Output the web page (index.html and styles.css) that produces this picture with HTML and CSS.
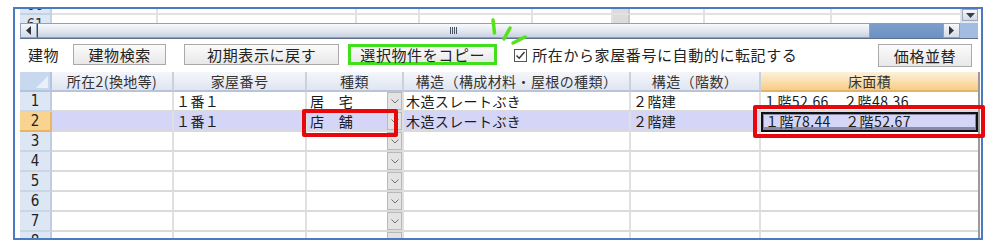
FILE: index.html
```html
<!DOCTYPE html>
<html lang="ja">
<head>
    <meta charset="UTF-8">
    <title>建物</title>
    <link rel="stylesheet" href="styles.css">
</head>
<body>
<div class="page">
    <div class="frame">
        <div class="upper">
            <div class="upper-grid">
                <div class="upper-rows">
                    <div class="uc rh num">60</div><div class="uc"></div><div class="uc"></div><div class="uc"></div><div class="uc"></div><div class="uc"></div><div class="uc dd-cell"></div><div class="uc"></div><div class="uc"></div><div class="uc"></div>
                    <div class="uc rh num">61</div><div class="uc"></div><div class="uc"></div><div class="uc"></div><div class="uc"></div><div class="uc"></div><div class="uc dd-cell"></div><div class="uc"></div><div class="uc"></div><div class="uc"></div>
                </div>
            </div>
            <div class="vscroll">
                <div class="vs-btn"><svg width="9" height="5" viewBox="0 0 9 5"><polygon points="0,0 9,0 4.5,5" fill="#3a3f4a"/></svg></div>
            </div>
        </div>

        <div class="hscroll">
            <div class="sb-btn"><svg width="5" height="9" viewBox="0 0 5 9"><polygon points="5,0 5,9 0,4.5" fill="#2f3440"/></svg></div>
            <div class="sb-thumb"><span class="grip"></span></div>
            <div class="sb-track"></div>
            <div class="sb-btn"><svg width="5" height="9" viewBox="0 0 5 9"><polygon points="0,0 0,9 5,4.5" fill="#2f3440"/></svg></div>
            <div class="sb-corner"></div>
        </div>

        <div class="toolbar">
            <span class="tb-label">建物</span>
            <button class="tb-btn btn-search">建物検索</button>
            <button class="tb-btn btn-reset">初期表示に戻す</button>
            <button class="tb-btn btn-copy">選択物件をコピー</button>
            <label class="tb-check">
                <svg width="13" height="13" viewBox="0 0 13 13"><rect x="0.5" y="0.5" width="12" height="12" fill="#fff" stroke="#555"/><polyline points="2.5,6.5 5.2,9.3 10.5,3" fill="none" stroke="#333" stroke-width="1.4"/></svg>
                所在から家屋番号に自動的に転記する
            </label>
            <button class="tb-btn btn-price">価格並替</button>
        </div>

        <div class="grid">
            <div class="hc corner"><svg width="12" height="12" viewBox="0 0 12 12"><polygon points="12,0 12,12 0,12" fill="#eaf0f9"/></svg></div>
            <div class="hc">所在2(換地等)</div>
            <div class="hc">家屋番号</div>
            <div class="hc">種類</div>
            <div class="hc">構造（構成材料・屋根の種類）</div>
            <div class="hc">構造（階数）</div>
            <div class="hc hc-active">床面積</div>

            <div class="c rh num">1</div><div class="c"></div><div class="c">１番１</div><div class="c kind"><span>居　宅</span><i class="dd"></i></div><div class="c">木造スレートぶき</div><div class="c">２階建</div><div class="c">１階52.66　２階48.36</div>

            <div class="c rh num rh-sel">2</div><div class="c sel"></div><div class="c sel">１番１</div><div class="c sel kind"><span>店　舗</span><i class="dd"></i></div><div class="c sel">木造スレートぶき</div><div class="c sel">２階建</div><div class="c sel focus">１階78.44　２階52.67</div>

            <div class="c rh num">3</div><div class="c"></div><div class="c"></div><div class="c kind"><span></span><i class="dd"></i></div><div class="c"></div><div class="c"></div><div class="c"></div>
            <div class="c rh num">4</div><div class="c"></div><div class="c"></div><div class="c kind"><span></span><i class="dd"></i></div><div class="c"></div><div class="c"></div><div class="c"></div>
            <div class="c rh num">5</div><div class="c"></div><div class="c"></div><div class="c kind"><span></span><i class="dd"></i></div><div class="c"></div><div class="c"></div><div class="c"></div>
            <div class="c rh num">6</div><div class="c"></div><div class="c"></div><div class="c kind"><span></span><i class="dd"></i></div><div class="c"></div><div class="c"></div><div class="c"></div>
            <div class="c rh num">7</div><div class="c"></div><div class="c"></div><div class="c kind"><span></span><i class="dd"></i></div><div class="c"></div><div class="c"></div><div class="c"></div>
            <div class="c rh num">8</div><div class="c"></div><div class="c"></div><div class="c kind"><span></span><i class="dd"></i></div><div class="c"></div><div class="c"></div><div class="c"></div>
        </div>
    </div>

    <!-- 注記 -->
    <svg class="mark-green" width="40" height="32" viewBox="0 0 40 32">
        <line x1="5" y1="3" x2="6.5" y2="16" />
        <line x1="22" y1="11" x2="16" y2="22" />
        <line x1="37" y1="20" x2="25" y2="26" />
    </svg>
    <div class="mark-red mark-kind"></div>
    <div class="mark-red mark-area"></div>
</div>
</body>
</html>
```

FILE: styles.css
```css
body { margin: 0; background: #fff; font-family: "Noto Sans CJK JP", sans-serif; color: #222; }
.page { position: relative; width: 1000px; height: 250px; overflow: hidden; }

.frame { margin: 7px 0 0 13px; width: 970px; height: 233px; box-sizing: border-box; border: 2px solid #4a7bc2; padding-left: 5px; overflow: hidden; display: flex; flex-direction: column; background: #fff; }

/* 上段（スクロール済みの一覧） */
.upper { display: flex; height: 14px; flex: none; }
.upper-grid { width: 942px; height: 14px; overflow: hidden; }
.upper-rows { display: grid; grid-template-columns: 32px 106px 199px 63px 113px 80px 17px 75px 127px 130px; grid-auto-rows: 20px; margin-top: -14px; }
.uc { box-sizing: border-box; border-right: 2px solid #e2e2e2; border-bottom: 2px solid #e2e2e2; }
.uc.rh { background: #dde7f4; border-color: #c4d2e6; line-height: 20px; text-align: center; color: #333; }
.uc.dd-cell { background: #dcdcdc; border-right-color: #c8c8c8; }
.vscroll { width: 16px; background: #e4e9f0; }
.vs-btn { height: 12px; box-sizing: border-box; border: 1px solid #9aa8bd; background: linear-gradient(#f5f7fa, #d3dae5); display: flex; align-items: center; justify-content: center; }

.hscroll { display: flex; height: 15px; flex: none; width: 958px; border-bottom: 1px solid #5d6f8c; }
.sb-btn { width: 17px; box-sizing: border-box; border: 1px solid #8fa2bf; background: linear-gradient(#f6f8fb, #d4dce8); display: flex; align-items: center; justify-content: center; }
.sb-thumb { width: 833px; box-sizing: border-box; border: 1px solid #8ea1bf; border-left-color: #3b4658; background: linear-gradient(#f8fafc 0%, #e6ebf2 45%, #c7d2e1 100%); display: flex; align-items: center; justify-content: center; }
.grip { width: 7px; height: 7px; background: repeating-linear-gradient(90deg, #4a5366 0 1px, transparent 1px 2px); }
.sb-track { width: 73px; background: linear-gradient(#7e9fcb, #6b91c4); }
.sb-corner { width: 18px; background: #a3bde2; }

/* ツールバー */
.toolbar { display: flex; align-items: flex-start; height: 33px; flex: none; padding-top: 5px; box-sizing: border-box; font-size: 15px; letter-spacing: 0.6px; color: #222; }
.tb-label { margin: 1px 0 0 8px; line-height: 20px; }
.tb-btn { font: inherit; letter-spacing: inherit; color: #222; height: 21px; padding: 0; line-height: 19px; box-sizing: border-box; border: 1px solid #aaaaaa; background: linear-gradient(#fbfbfb, #e8e8e8); }
.btn-search { width: 93px; margin-left: 14px; }
.btn-reset { width: 155px; margin-left: 18px; }
.btn-copy { width: 149px; margin-left: 9px; border: 3px solid #41e01c; line-height: 15px; }
.tb-check { display: flex; align-items: center; gap: 5px; margin: 1px 0 0 17px; line-height: 20px; }
.btn-price { width: 94px; height: 23px; margin-left: auto; margin-right: 9px; line-height: 21px; }

/* 建物一覧 */
.grid { display: grid; grid-template-columns: 32px 122px 133px 97px 227px 130px 217px; grid-auto-rows: 20px; width: 958px; border-right: 2px solid #9a9a9a; font-size: 14px; letter-spacing: 0.4px; color: #1a1a1a; }
.hc { box-sizing: border-box; border-right: 2px solid #c9d1e0; border-bottom: 2px solid #b9c4d8; background: linear-gradient(#f4f6fb, #dfe5f2); text-align: center; line-height: 18px; color: #333; }
.hc.corner { background: #c8d8ee; border-color: #b3c4de; display: flex; align-items: flex-end; justify-content: flex-end; padding: 0 2px 2px 0; }
.hc.hc-active { background: linear-gradient(#fdf1dc, #f8cd84); border-color: #e3b468; border-right: none; }
.c { box-sizing: border-box; border-right: 2px solid #e0e0e0; border-bottom: 2px solid #dadada; line-height: 18px; padding-left: 2px; white-space: nowrap; overflow: hidden; }
.c:nth-child(7n) { border-right: none; }
.c.rh { background: #dde7f4; border-right-color: #bfcde2; border-bottom-color: #c9d6e8; text-align: center; padding: 0; color: #222; }
.c.rh-sel { background: #f9d490; border-color: #e8b565; }
.c.sel { background: #d5d5f7; }
.c.focus { outline: 2px solid #111; outline-offset: -2px; box-shadow: inset 0 0 0 3px #8a8aa8; padding-left: 4px; }
.num { font-family: "DejaVu Sans", sans-serif; font-stretch: condensed; font-size: 15px; letter-spacing: 0; }

.kind { display: flex; padding-left: 3px; }
.kind span { flex: 1; }
.dd { display: block; width: 15px; height: 18px; box-sizing: border-box; border: 1px solid #b9b9b9; background: #e3e3e3 url("data:image/svg+xml,%3Csvg xmlns='http://www.w3.org/2000/svg' width='8' height='5'%3E%3Cpolyline points='0.5,0.5 4,4 7.5,0.5' fill='none' stroke='%23707070'/%3E%3C/svg%3E") no-repeat center; }

/* 注記の枠と印 */
.mark-green { position: absolute; left: 488px; top: 17px; }
.mark-green line { stroke: #55e21b; stroke-width: 3.5; stroke-linecap: round; }
.mark-red { position: absolute; border: 4px solid #e8070d; border-radius: 2px; box-sizing: border-box; }
.mark-kind { left: 302px; top: 109px; width: 96px; height: 28px; }
.mark-area { left: 753px; top: 105px; width: 232px; height: 33px; }
```
